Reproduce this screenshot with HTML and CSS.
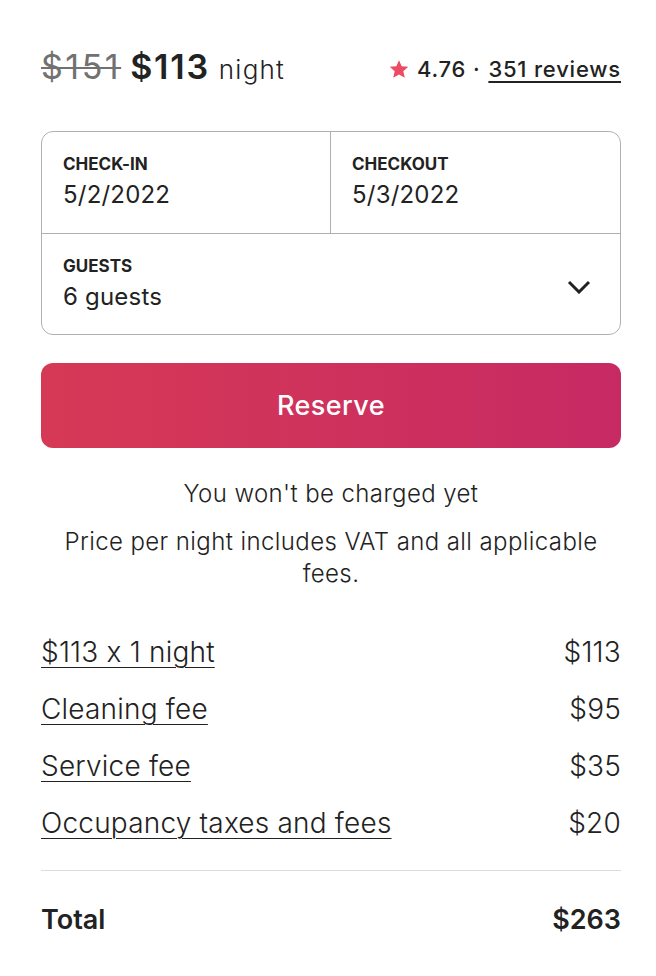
FILE: index.html
```html
<!DOCTYPE html>
<html lang="en">
<head>
    <meta charset="UTF-8">
    <meta name="viewport" content="width=device-width, initial-scale=1.0">
    <title>Reserve</title>
    <link rel="stylesheet" href="styles.css">
</head>
<body>

    <div class="booking-card">
        <div class="price-header">
            <div class="price">
                <span class="old-price">$151</span>
                <span class="new-price">$113</span>
                <span class="per-night">night</span>
            </div>
            <div class="rating">
                <svg class="star" viewBox="0 0 32 32" aria-hidden="true">
                    <path d="M16 1.8l4.3 9.6 10.5 1.1-7.9 7.1 2.3 10.3L16 24.6l-9.2 5.3 2.3-10.3-7.9-7.1 10.5-1.1z"></path>
                </svg>
                <span>4.76 ·</span>
                <a href="#" class="reviews">351 reviews</a>
            </div>
        </div>

        <div class="date-picker">
            <div class="field">
                <div class="field-label">CHECK-IN</div>
                <div class="field-value">5/2/2022</div>
            </div>
            <div class="field">
                <div class="field-label">CHECKOUT</div>
                <div class="field-value">5/3/2022</div>
            </div>
            <div class="field guests">
                <div>
                    <div class="field-label">GUESTS</div>
                    <div class="field-value">6 guests</div>
                </div>
                <svg class="chevron" viewBox="0 0 24 14" aria-hidden="true">
                    <path d="M2 2l10 10 10-10"></path>
                </svg>
            </div>
        </div>

        <button class="reserve-btn">Reserve</button>

        <p class="note">You won't be charged yet</p>
        <p class="note">Price per night includes VAT and all applicable fees.</p>

        <div class="breakdown">
            <div class="line-item"><a href="#">$113 x 1 night</a><span>$113</span></div>
            <div class="line-item"><a href="#">Cleaning fee</a><span>$95</span></div>
            <div class="line-item"><a href="#">Service fee</a><span>$35</span></div>
            <div class="line-item"><a href="#">Occupancy taxes and fees</a><span>$20</span></div>
        </div>

        <div class="total">
            <span>Total</span>
            <span>$263</span>
        </div>
    </div>

</body>
</html>
```

FILE: styles.css
```css
:root {
    --text-color: #222222;
    --muted-color: #717171;
    --border-color: #b0b0b0;
    --divider-color: #dddddd;
    --star-color: #eb4c63;
}

body {
    margin: 0;
    font-family: Inter, 'Noto Sans', sans-serif;
    font-feature-settings: "calt" 0;
    color: var(--text-color);
    background-color: #ffffff;
}

.booking-card {
    padding: 46px 35px 40px 41px;
}

.price-header {
    display: flex;
    justify-content: space-between;
    align-items: baseline;
}

.price {
    display: flex;
    align-items: baseline;
    gap: 9px;
}

.old-price {
    font-size: 34px;
    color: var(--muted-color);
    text-decoration: line-through;
    text-decoration-thickness: 2px;
    letter-spacing: 2.5px;
}

.new-price {
    font-size: 34px;
    font-weight: 600;
    letter-spacing: 1.8px;
}

.per-night {
    font-size: 26px;
    font-weight: 300;
    letter-spacing: 1.2px;
}

.rating {
    display: flex;
    align-items: center;
    gap: 8px;
    font-size: 22px;
    font-weight: 500;
    letter-spacing: 0.8px;
}

.star {
    width: 20px;
    height: 20px;
    fill: var(--star-color);
    margin-right: 0;
}

.reviews {
    color: var(--text-color);
    text-decoration: underline;
    text-decoration-thickness: 2px;
    text-underline-offset: 4px;
}

.date-picker {
    margin-top: 44px;
    display: grid;
    grid-template-columns: 1fr 1fr;
    border: 1px solid var(--border-color);
    border-radius: 12px;
}

.field {
    padding: 22px 21px 0;
    height: 101px;
    box-sizing: border-box;
}

.field:first-child {
    border-right: 1px solid var(--border-color);
}

.field.guests {
    grid-column: 1 / 3;
    border-top: 1px solid var(--border-color);
    display: flex;
    justify-content: space-between;
    align-items: flex-start;
}

.field-label {
    font-size: 17px;
    font-weight: 700;
}

.field-value {
    margin-top: 6px;
    font-size: 24px;
    font-weight: 400;
    letter-spacing: 0.2px;
}

.chevron {
    width: 24px;
    height: 14px;
    fill: none;
    stroke: var(--text-color);
    stroke-width: 3;
    margin: 24px 8px 0 0;
}

.reserve-btn {
    display: block;
    width: 100%;
    height: 85px;
    margin-top: 28px;
    border: none;
    border-radius: 12px;
    background: linear-gradient(to right, #d63955, #c72a63);
    color: #ffffff;
    font-family: inherit;
    font-size: 27px;
    font-weight: 500;
    letter-spacing: 0.4px;
    cursor: pointer;
}

.note {
    margin: 0;
    text-align: center;
    font-size: 24px;
    line-height: 32px;
    font-weight: 300;
    letter-spacing: 0.4px;
}

.note:first-of-type {
    margin-top: 30px;
    margin-bottom: 16px;
}

.breakdown {
    margin-top: 45px;
    padding-bottom: 30px;
    border-bottom: 1px solid var(--divider-color);
    display: flex;
    flex-direction: column;
    gap: 23px;
}

.line-item {
    display: flex;
    justify-content: space-between;
    font-size: 28px;
    font-weight: 300;
    line-height: 34px;
    letter-spacing: 0.2px;
}

.line-item a {
    color: var(--text-color);
    text-decoration: underline;
    text-decoration-thickness: 1px;
    text-underline-offset: 5px;
}

.total {
    display: flex;
    justify-content: space-between;
    margin-top: 32px;
    font-size: 27px;
    font-weight: 600;
}
```
